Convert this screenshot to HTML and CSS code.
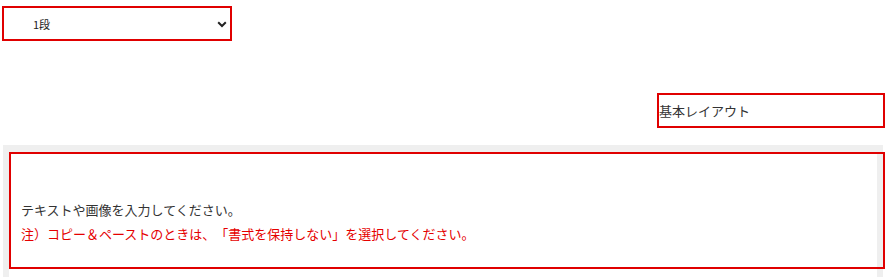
FILE: index.html
```html
<!DOCTYPE html>
<html lang="ja">
<head>
<meta charset="utf-8">
<title>Layout</title>
<link rel="stylesheet" href="styles.css">
</head>
<body>
<div class="select-wrap">
  <select class="step-select">
    <option>1段</option>
    <option>2段</option>
    <option>3段</option>
  </select>
  <svg class="chevron" width="10" height="7" viewBox="0 0 10 7" aria-hidden="true">
    <path d="M1.2 1.3 L5 5 L8.8 1.3" fill="none" stroke="#222" stroke-width="2"/>
  </svg>
</div>
<div class="layout-row">
  <div class="layout-box">基本レイアウト</div>
</div>
<div class="editor-frame">
  <div class="editor-body">
    <p class="line">テキストや画像を入力してください。</p>
    <p class="line note">注）コピー＆ペーストのときは、「書式を保持しない」を選択してください。</p>
  </div>
</div>
</body>
</html>
```
FILE: styles.css
```css
html, body {
  margin: 0;
  padding: 0;
  background: #fff;
  font-family: "Noto Sans CJK JP", "Noto Sans", sans-serif;
  color: #333;
  text-spacing-trim: space-all;
}

.select-wrap {
  position: relative;
  width: 230px;
  height: 35px;
  margin: 6px 0 0 2px;
}

.step-select {
  appearance: none;
  -webkit-appearance: none;
  box-sizing: border-box;
  width: 230px;
  height: 35px;
  margin: 0;
  border: 2px solid #e00000;
  border-radius: 0;
  background: #fff;
  padding: 0 0 0 29px;
  font-family: "Noto Sans CJK JP", sans-serif;
  font-size: 11px;
  color: #222;
  outline: none;
}

.chevron {
  position: absolute;
  left: 215px;
  top: 15px;
  pointer-events: none;
}

.layout-row {
  display: flex;
  justify-content: flex-end;
  margin-top: 52px;
  padding-right: 6px;
}

.layout-box {
  box-sizing: border-box;
  width: 228px;
  height: 35px;
  border: 2px solid #e00000;
  display: flex;
  align-items: center;
  padding-left: 0;
  font-size: 13px;
  color: #333;
}

.editor-frame {
  box-sizing: border-box;
  width: 880px;
  margin: 17px 0 0 3px;
  background: #fff;
  border-left: 6px solid #efefef;
  border-top: 7px solid #efefef;
  box-shadow: inset -6px 0 0 #efefef;
  padding-bottom: 20px;
}

.editor-body {
  box-sizing: border-box;
  height: 117px;
  margin-right: -2px;
  border: 2px solid #e00000;
  background: transparent;
  padding: 44px 10px 0 10px;
}

.line {
  margin: 0;
  font-size: 13px;
  line-height: 24px;
  color: #333;
  white-space: nowrap;
  text-spacing-trim: space-all;
}

.note {
  color: #e50000;
}
```
